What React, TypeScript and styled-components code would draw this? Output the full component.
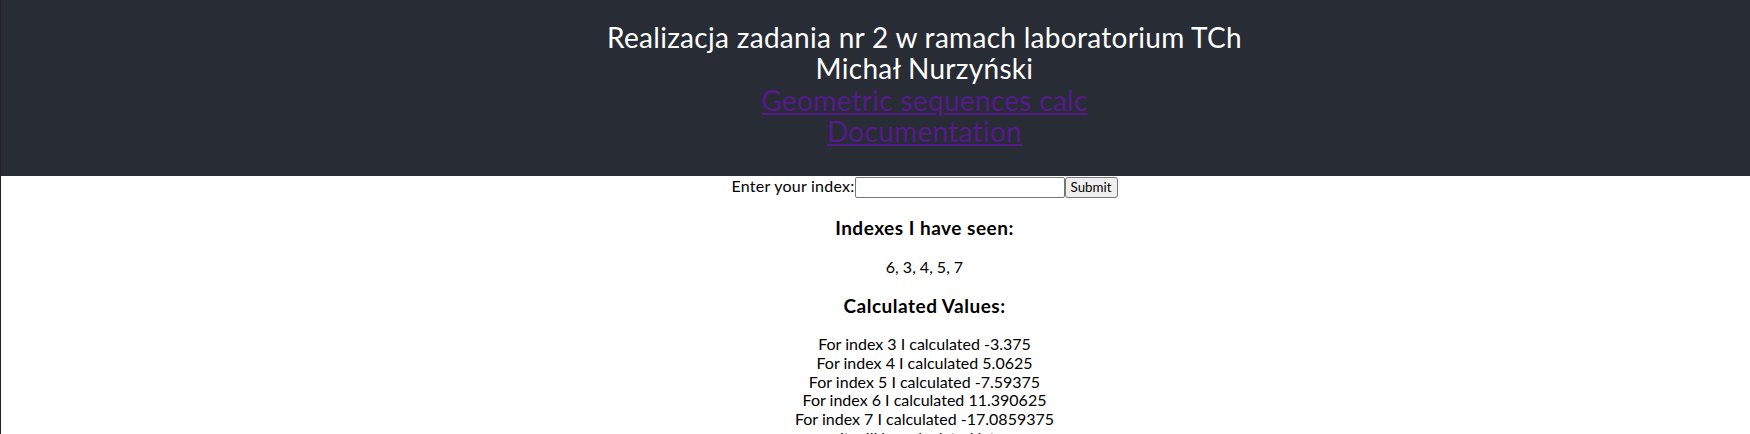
import React from "react";
import styled, { createGlobalStyle, css } from "styled-components";

const GlobalStyle = createGlobalStyle`
  html, body {
    margin: 0;
    padding: 0;
    background: #ffffff;
  }
  body {
    font-family: Lato, "Noto Sans", sans-serif;
    color: #000000;
    border-left: 1px solid #2d1a2f;
    overflow: hidden;
  }
`;

const shiftedCentre = css`
  padding-left: 98px;
  box-sizing: border-box;
  text-align: center;
`;

const Header = styled.header`
  ${shiftedCentre};
  background-color: #282c34;
  color: #ffffff;
  display: flex;
  flex-direction: column;
  align-items: center;
  height: 176px;
  padding-top: 21.7px;
  font-size: 28px;
  letter-spacing: 0.3px;
  line-height: 31.5px;
`;

const HeaderLine = styled.div``;

const HeaderLink = styled.a`
  color: #551a8b;
  text-decoration: underline;
`;

const Main = styled.main`
  ${shiftedCentre};
  font-size: 16px;
`;

const Form = styled.form`
  display: flex;
  justify-content: center;
  align-items: center;
  height: 22.6px;
`;

const Label = styled.label`
  line-height: 18.4px;
  letter-spacing: 0.25px;
  margin-bottom: 3px;
`;

const Input = styled.input`
  width: 210px;
  height: 21px;
  box-sizing: border-box;
  border: 1px solid #767676;
  border-radius: 2px;
  padding: 1px 2px;
  margin: 0;
  font-size: 13.33px;
  background: #ffffff;
`;

const Button = styled.button`
  width: 53px;
  height: 21px;
  box-sizing: border-box;
  border: 1px solid #767676;
  border-radius: 3px;
  background: #efefef;
  padding: 1px 4px;
  margin: 0;
  font-family: inherit;
  font-size: 13.33px;
  color: #000000;
`;

const Heading = styled.h3`
  font-size: 19px;
  letter-spacing: 0.5px;
  line-height: 21.5px;
  font-weight: 700;
  margin: 18.72px 0;
`;

const Line = styled.div`
  line-height: 18.7px;
`;

const values: [number, string][] = [
  [3, "-3.375"],
  [4, "5.0625"],
  [5, "-7.59375"],
  [6, "11.390625"],
  [7, "-17.0859375"],
];

export default function App() {
  return (
    <>
      <GlobalStyle />
      <Header>
        <HeaderLine>Realizacja zadania nr 2 w ramach laboratorium TCh</HeaderLine>
        <HeaderLine>Michał Nurzyński</HeaderLine>
        <HeaderLink href="#">Geometric sequences calc</HeaderLink>
        <HeaderLink href="#">Documentation</HeaderLink>
      </Header>
      <Main>
        <Form onSubmit={(e) => e.preventDefault()}>
          <Label htmlFor="idx">Enter your index:</Label>
          <Input id="idx" type="text" />
          <Button type="submit">Submit</Button>
        </Form>
        <Heading>Indexes I have seen:</Heading>
        <Line>6, 3, 4, 5, 7</Line>
        <Heading>Calculated Values:</Heading>
        {values.map(([i, v]) => (
          <Line key={i}>
            For index {i} I calculated {v}
          </Line>
        ))}
        <Line>it will be calculated later</Line>
      </Main>
    </>
  );
}
